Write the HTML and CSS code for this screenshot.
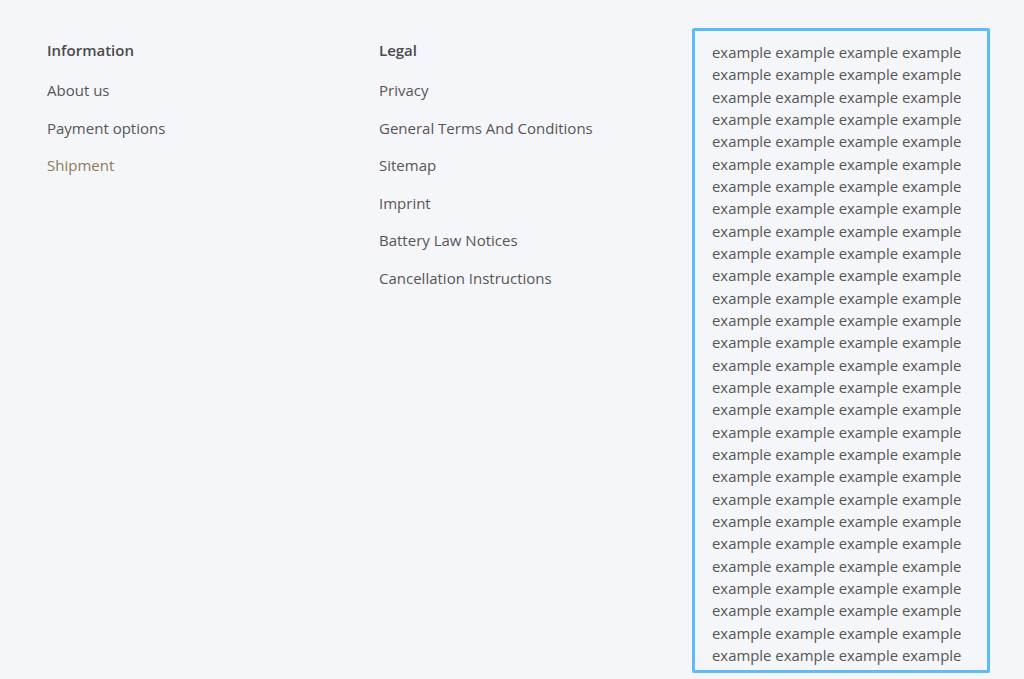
FILE: index.html
```html
<!DOCTYPE html>
<html lang="en">
<head>
<meta charset="utf-8">
<title>Footer</title>
<link rel="stylesheet" href="styles.css">
</head>
<body>
<footer class="footer">
  <div class="col">
    <h3 class="col-title">Information</h3>
    <ul class="links">
      <li><a href="#">About us</a></li>
      <li><a href="#">Payment options</a></li>
      <li><a href="#" class="active">Shipment</a></li>
    </ul>
  </div>
  <div class="col">
    <h3 class="col-title">Legal</h3>
    <ul class="links">
      <li><a href="#">Privacy</a></li>
      <li><a href="#">General Terms And Conditions</a></li>
      <li><a href="#">Sitemap</a></li>
      <li><a href="#">Imprint</a></li>
      <li><a href="#">Battery Law Notices</a></li>
      <li><a href="#">Cancellation Instructions</a></li>
    </ul>
  </div>
  <div class="col">
    <div class="example-box">
      <p>
        example example example example
        example example example example
        example example example example
        example example example example
        example example example example
        example example example example
        example example example example
        example example example example
        example example example example
        example example example example
        example example example example
        example example example example
        example example example example
        example example example example
        example example example example
        example example example example
        example example example example
        example example example example
        example example example example
        example example example example
        example example example example
        example example example example
        example example example example
        example example example example
        example example example example
        example example example example
        example example example example
        example example example example
      </p>
    </div>
  </div>
</footer>
</body>
</html>
```
FILE: styles.css
```css
html, body {
  margin: 0;
  padding: 0;
  background: #f5f6fa;
}
body {
  font-family: "Open Sans", "Liberation Sans", sans-serif;
  color: #555;
}
.footer {
  display: grid;
  grid-template-columns: 332px 313px 298px;
  padding: 28px 0 0 47px;
}
.col-title {
  margin: 12px 0 0;
  font-size: 15px;
  line-height: 20px;
  font-weight: 600;
  color: #4a4a4a;
}
.links {
  list-style: none;
  margin: 20px 0 0;
  padding: 0;
}
.links li {
  font-size: 15px;
  line-height: 20px;
  margin-bottom: 17.6px;
}
.links a {
  color: #555;
  text-decoration: none;
}
.links a.active {
  color: #8c7b55;
}
.example-box {
  box-sizing: border-box;
  width: 298px;
  border: 3px solid #5cbcf6;
  border-radius: 2px;
  padding: 10px 16px 4px 17px;
}
.example-box p {
  margin: 0;
  font-size: 14.9px;
  line-height: 22.33px;
  color: #555;
}
```
